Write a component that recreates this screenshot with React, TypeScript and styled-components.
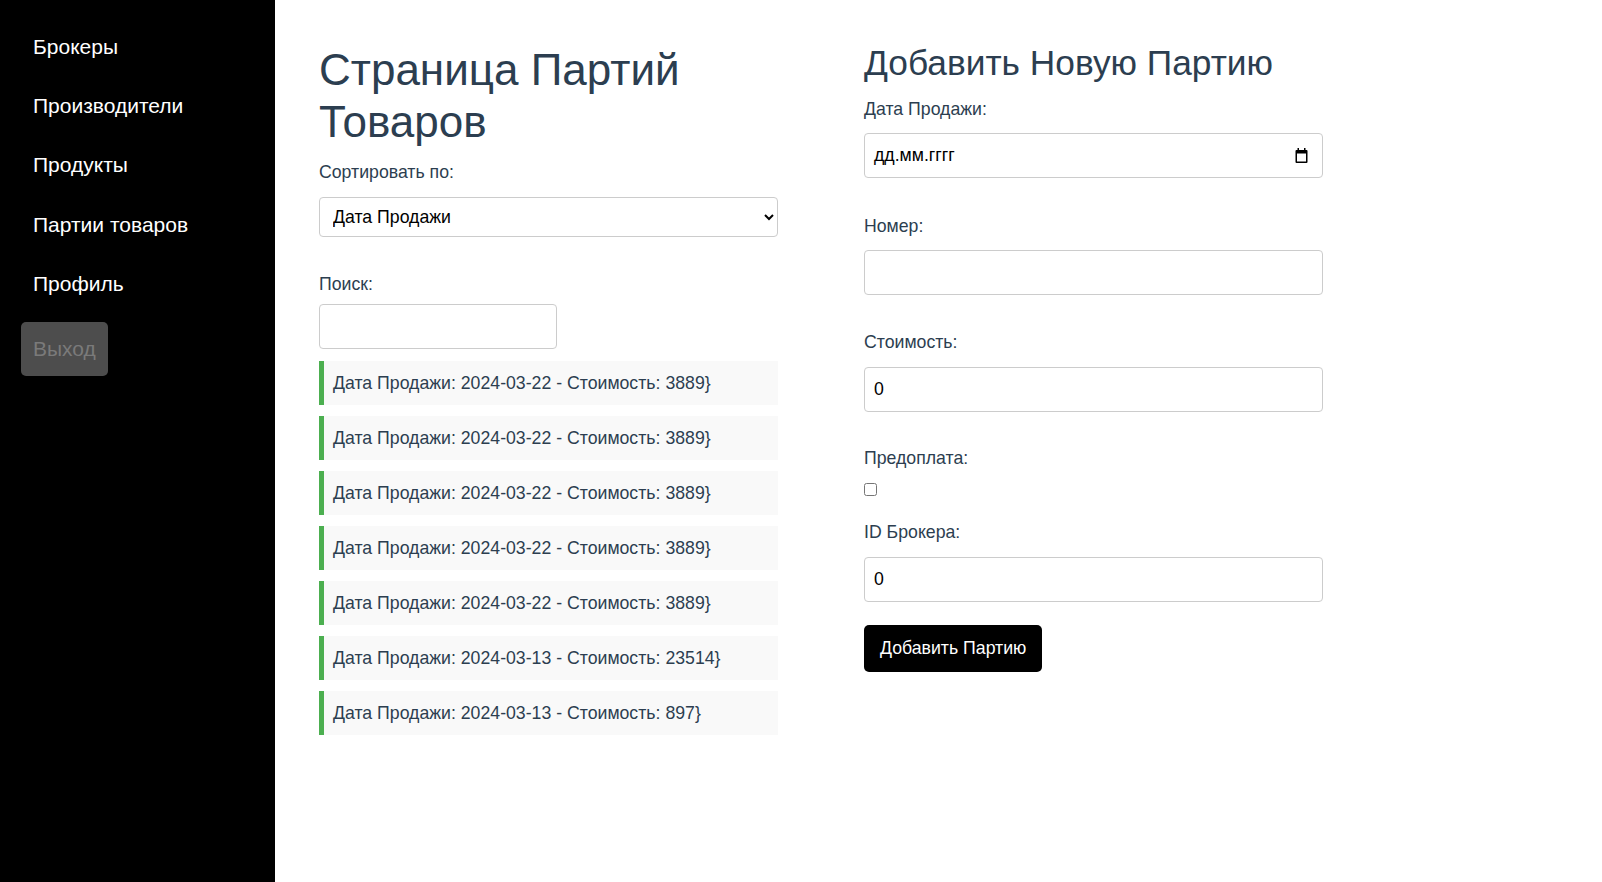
import React from "react";
import styled, { createGlobalStyle } from "styled-components";

const GlobalStyle = createGlobalStyle`
  html, body { margin: 0; padding: 0; }
  body {
    font-family: "Liberation Sans", Arial, sans-serif;
    background: #fff;
  }
  * { box-sizing: border-box; }
`;

const Layout = styled.div`
  display: flex;
  min-height: 100vh;
`;

const Sidebar = styled.nav`
  width: 275px;
  flex-shrink: 0;
  background: #000;
  padding: 17px 21px;
  display: flex;
  flex-direction: column;
  align-items: flex-start;
`;

const NavLink = styled.a`
  display: block;
  color: #fff;
  text-decoration: none;
  font-size: 21px;
  line-height: 26px;
  padding: 16.7px 12px;
`;

const LogoutButton = styled.button`
  margin-top: 8px;
  height: 54px;
  padding: 0 12px;
  background: #4d4d4d;
  color: #7a7a7a;
  border: none;
  border-radius: 5px;
  font-family: inherit;
  font-size: 21px;
  line-height: 26px;
`;

const Main = styled.main`
  flex: 1;
  display: flex;
  align-items: flex-start;
  gap: 86px;
  padding-left: 44px;
  color: #2c3e50;
`;

const Column = styled.section<{ $width: number }>`
  width: ${(p) => p.$width}px;
  display: flex;
  flex-direction: column;
  align-items: flex-start;
`;

const PageTitle = styled.h1`
  margin: 44px 0 0;
  font-size: 44px;
  line-height: 52px;
  font-weight: normal;
`;

const FormTitle = styled.h2`
  margin: 43px 0 0;
  font-size: 35.3px;
  line-height: 40px;
  font-weight: normal;
`;

const FieldLabel = styled.label<{ $top: number }>`
  display: block;
  margin-top: ${(p) => p.$top}px;
  font-size: 17.7px;
  line-height: 21px;
`;

const SortSelect = styled.select`
  margin-top: 14px;
  width: 100%;
  height: 40px;
  padding: 0 9px;
  border: 1px solid #ccc;
  border-radius: 4px;
  background: #fff;
  color: #000;
  font-family: inherit;
  font-size: 17.7px;
`;

const TextInput = styled.input<{ $top: number; $width?: string }>`
  margin-top: ${(p) => p.$top}px;
  width: ${(p) => p.$width ?? "100%"};
  height: 45px;
  padding: 0 9px;
  border: 1px solid #ccc;
  border-radius: 4px;
  background: #fff;
  color: #000;
  font-family: inherit;
  font-size: 17.7px;
`;

const DateField = styled.div`
  margin-top: 13px;
  width: 100%;
  height: 45px;
  padding: 0 14px 0 9px;
  border: 1px solid #ccc;
  border-radius: 4px;
  display: flex;
  align-items: center;
  justify-content: space-between;
  color: #000;
  font-size: 17.7px;
`;

const CheckBox = styled.input`
  margin: 14px 0 0;
  width: 13px;
  height: 13px;
`;

const SubmitButton = styled.button`
  margin-top: 23px;
  height: 47px;
  padding: 0 16px;
  background: #000;
  color: #fff;
  border: none;
  border-radius: 5px;
  font-family: inherit;
  font-size: 17.7px;
`;

const BatchList = styled.ul`
  list-style: none;
  margin: 12px 0 0;
  padding: 0;
  width: 100%;
`;

const BatchItem = styled.li`
  height: 44px;
  margin-bottom: 11px;
  padding: 0 9px;
  display: flex;
  align-items: center;
  background: #f9f9f9;
  border-left: 5px solid #4caf50;
  font-size: 17.7px;
`;

const CalendarIcon = () => (
  <svg width="13" height="15" viewBox="0 0 13 15" fill="#000">
    <path
      fillRule="evenodd"
      d="M2.5 0H4v2h5V0h1.5v2h1a1 1 0 0 1 1 1v11a1 1 0 0 1-1 1h-10a1 1 0 0 1-1-1V3a1 1 0 0 1 1-1h1V0zM2 5.5V13.5h9V5.5H2z"
    />
  </svg>
);

const batches = [
  { date: "2024-03-22", cost: 3889 },
  { date: "2024-03-22", cost: 3889 },
  { date: "2024-03-22", cost: 3889 },
  { date: "2024-03-22", cost: 3889 },
  { date: "2024-03-22", cost: 3889 },
  { date: "2024-03-13", cost: 23514 },
  { date: "2024-03-13", cost: 897 },
];

const navItems = ["Брокеры", "Производители", "Продукты", "Партии товаров", "Профиль"];

export default function App() {
  return (
    <>
      <GlobalStyle />
      <Layout>
        <Sidebar>
          {navItems.map((n) => (
            <NavLink key={n} href="#">
              {n}
            </NavLink>
          ))}
          <LogoutButton>Выход</LogoutButton>
        </Sidebar>
        <Main>
          <Column $width={459}>
            <PageTitle>
              Страница Партий
              <br />
              Товаров
            </PageTitle>
            <FieldLabel $top={14}>Сортировать по:</FieldLabel>
            <SortSelect defaultValue="date">
              <option value="date">Дата Продажи</option>
              <option value="cost">Стоимость</option>
            </SortSelect>
            <FieldLabel $top={37}>Поиск:</FieldLabel>
            <TextInput $top={9} $width="238px" type="text" />
            <BatchList>
              {batches.map((b, i) => (
                <BatchItem key={i}>
                  Дата Продажи: {b.date} - Стоимость: {b.cost}
                  {"}"}
                </BatchItem>
              ))}
            </BatchList>
          </Column>
          <Column $width={459}>
            <FormTitle>Добавить Новую Партию</FormTitle>
            <FieldLabel $top={16}>Дата Продажи:</FieldLabel>
            <DateField>
              <span>дд.мм.гггг</span>
              <CalendarIcon />
            </DateField>
            <FieldLabel $top={38}>Номер:</FieldLabel>
            <TextInput $top={13} type="text" />
            <FieldLabel $top={37}>Стоимость:</FieldLabel>
            <TextInput $top={14} type="number" defaultValue={0} />
            <FieldLabel $top={36}>Предоплата:</FieldLabel>
            <CheckBox type="checkbox" />
            <FieldLabel $top={26}>ID Брокера:</FieldLabel>
            <TextInput $top={14} type="number" defaultValue={0} />
            <SubmitButton>Добавить Партию</SubmitButton>
          </Column>
        </Main>
      </Layout>
    </>
  );
}
